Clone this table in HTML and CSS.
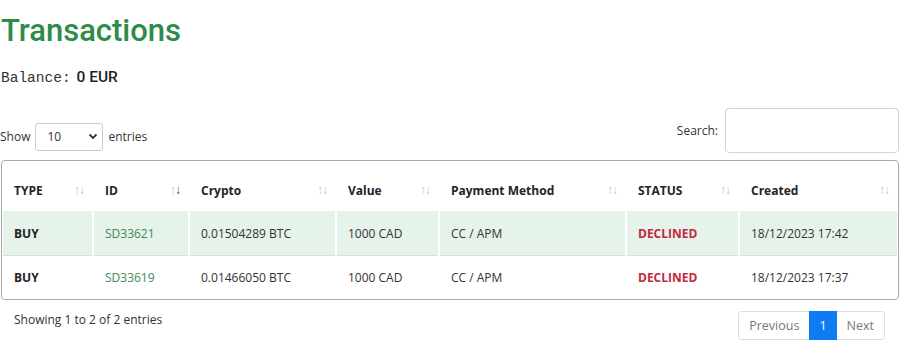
FILE: index.html
```html
<!DOCTYPE html>
<html>
<head>
<meta charset="utf-8">
<link rel="stylesheet" href="styles.css">
</head>
<body>
<div class="page">
  <h1 class="title">Transactions</h1>
  <div class="balance"><span class="mono">Balance:</span> <b>0 EUR</b></div>
  <div class="controls">
    <label class="length">Show
      <span class="select">10<svg width="10" height="7" viewBox="0 0 10 7"><path d="M1.5 1.5 L5 5 L8.5 1.5" fill="none" stroke="#333" stroke-width="1.8"/></svg></span>
      entries</label>
    <label class="search">Search: <span class="input"></span></label>
  </div>
  <div class="card">
    <table class="tbl">
      <colgroup>
        <col style="width:89px"><col style="width:94px"><col style="width:145px"><col style="width:101px"><col style="width:185px"><col style="width:111px"><col>
      </colgroup>
      <thead>
        <tr>
          <th>TYPE<span class="sort">↑↓</span></th>
          <th>ID<span class="sort desc">↑<b>↓</b></span></th>
          <th>Crypto<span class="sort">↑↓</span></th>
          <th>Value<span class="sort">↑↓</span></th>
          <th>Payment Method<span class="sort">↑↓</span></th>
          <th>STATUS<span class="sort">↑↓</span></th>
          <th>Created<span class="sort">↑↓</span></th>
        </tr>
      </thead>
      <tbody>
        <tr class="odd">
          <td class="strong">BUY</td><td class="id">SD33621</td><td>0.01504289 BTC</td><td>1000 CAD</td><td>CC / APM</td><td class="declined">DECLINED</td><td>18/12/2023 17:42</td>
        </tr>
        <tr>
          <td class="strong">BUY</td><td class="id">SD33619</td><td>0.01466050 BTC</td><td>1000 CAD</td><td>CC / APM</td><td class="declined">DECLINED</td><td>18/12/2023 17:37</td>
        </tr>
      </tbody>
    </table>
  </div>
  <div class="footer">
    <div class="info">Showing 1 to 2 of 2 entries</div>
    <div class="pager">
      <span class="pbtn">Previous</span><span class="pbtn active">1</span><span class="pbtn">Next</span>
    </div>
  </div>
</div>
</body>
</html>
```
FILE: styles.css
```css
* { box-sizing: border-box; }
html, body { margin: 0; padding: 0; background: #fff; }
body { font-family: "Open Sans", "Noto Sans", sans-serif; font-size: 12px; color: #212529; }
.page { width: 900px; padding: 0 1px; }
.title {
  margin: 0; padding-top: 12px;
  font-family: Roboto, "Noto Sans", sans-serif; font-weight: 500;
  font-size: 31px; line-height: 38px; color: #2c8c48;
}
.balance { margin-top: 16px; font-size: 15px; line-height: 20px; color: #222; }
.mono { font-family: "Liberation Mono", "DejaVu Sans Mono", monospace; font-size: 14.5px; color: #333; }
.balance b { font-family: Roboto, sans-serif; font-weight: 500; font-size: 15.5px; margin-left: 2px; }
.controls { display: flex; justify-content: space-between; align-items: center; margin-top: 20px; height: 45px; }
.length { display: flex; align-items: center; gap: 5px; color: #333; margin-left: -1px; margin-top: 12px; }
.select {
  display: inline-flex; align-items: center; justify-content: space-between;
  width: 68px; height: 28px; padding: 0 4px 0 11px;
  border: 1px solid #ccc; border-radius: 3px; color: #333;
}
.search { display: flex; align-items: center; gap: 7px; color: #333; }
.input { display: block; width: 174px; height: 45px; border: 1px solid #d4d4d4; border-radius: 4px; }
.card { margin-top: 7px; border: 1px solid #a9a9a9; border-radius: 4px; padding: 0 0 1px; overflow: hidden; }
.tbl { width: calc(100% + 2px); margin-left: -1px; border-collapse: separate; border-spacing: 2px 0; table-layout: fixed; }
.tbl th {
  position: relative; text-align: left; font-weight: 700; font-size: 12px;
  height: 50px; padding: 8px 11px 0; color: #212529;
}
.sort { position: absolute; right: 8px; top: 20px; font-size: 12px; color: #c4c4c4; font-weight: 400; letter-spacing: -1px; }
.sort.desc b { color: #444; font-weight: 400; }
.tbl td { height: 44px; padding: 0 11px; font-size: 12px; color: #333; }
.tbl tr.odd td { background: #e6f3eb; }
.tbl tbody tr + tr td { border-top: 1px solid #dcdcdc; height: 43px; }
.tbl td.strong { font-weight: 700; color: #222; }
.tbl td.id { color: #3e8b53; }
.tbl td.declined { color: #c5283d; font-weight: 700; }
.footer { display: flex; justify-content: space-between; align-items: flex-start; margin-top: 11px; }
.info { padding-left: 13px; margin-top: 0; color: #333; line-height: 18px; }
.pager { display: flex; margin-right: 14px; }
.pbtn {
  display: block; height: 29px; line-height: 27px; padding: 0 10px; font-size: 12.5px;
  border: 1px solid #ddd; color: #777; margin-left: -1px; background: #fff;
}
.pbtn:first-child { border-radius: 3px 0 0 3px; }
.pbtn:last-child { border-radius: 0 3px 3px 0; }
.pbtn.active { background: #0d7cf2; border-color: #0d7cf2; color: #fff; position: relative; padding: 0 9px; }
```
